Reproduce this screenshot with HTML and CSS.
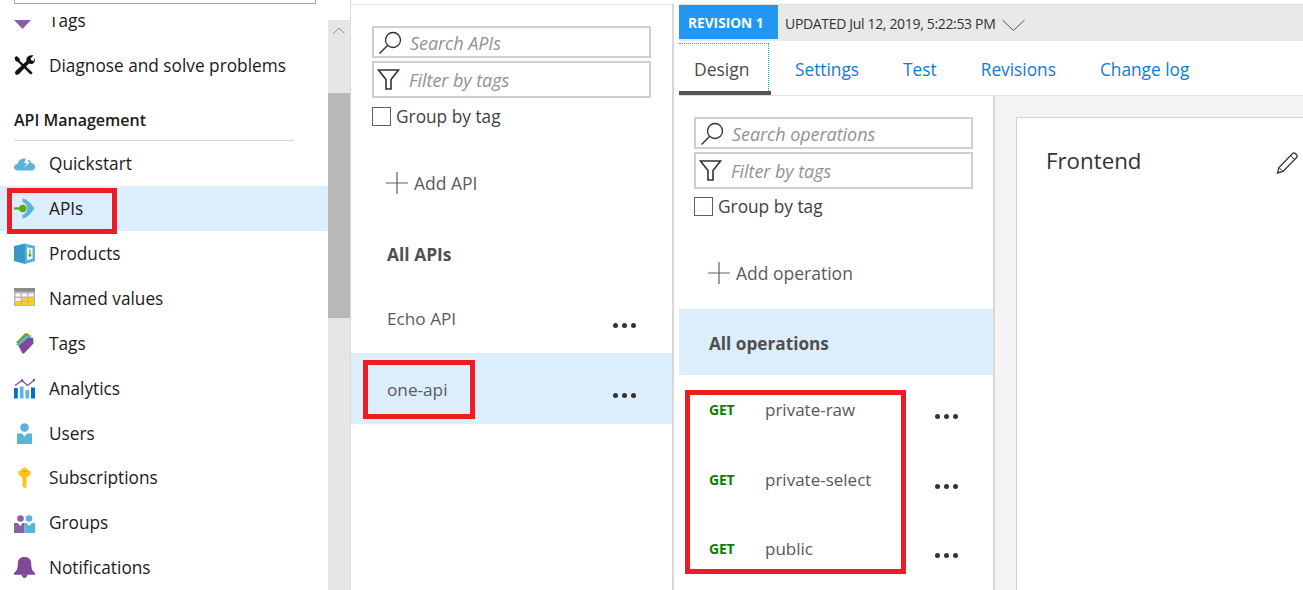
FILE: index.html
```html
<!DOCTYPE html>
<html lang="en">
<head>
<meta charset="utf-8">
<title>API Management - APIs</title>
<link rel="stylesheet" href="styles.css">
</head>
<body>
<div class="page">
  <aside class="sidebar">
    <div class="side-search"></div>
    <div class="side-body">
      <nav class="nav">
        <div class="nav-item"><svg class="ico" viewBox="0 0 21 21"><path d="M0 10H17L8.500 19z" fill="#8661a5"/></svg><span>Tags</span></div>
        <div class="nav-item"><svg class="ico" viewBox="0 0 21 21"><path d="M2.500 1L5.500 3.500 6 6 18.500 17.500 17.200 19.500 16 19 4 7 1.500 6 0.500 2.500z" fill="#111"/><path d="M14 1.500c2-1.500 4-1.500 5.500-1L16.500 3.500l1 2 2 .5L20.500 3c.8 2.500 0 4.500-1.500 5.500-1.500.8-3 .5-4 0L5.500 18.500C4 20.300 2 20 1.500 19.200 .7 18 1 16.700 2 15.800L12.500 6c-.5-1.500 0-3.200 1.500-4.500z" fill="#111"/></svg><span>Diagnose and solve problems</span></div>
        <h3 class="nav-title">API Management</h3>
        <div class="nav-item"><svg class="ico" viewBox="0 0 21 21"><path d="M4 17.500C1.500 17.500 0 16 0 14.200 0 12.300 1.500 11 3.500 11c.5-2.500 2.500-5 5.500-5.500h3L10 10h3l-2.500 4.500L16 9l-2.200-.2 .7-2.300c1.500.8 2.500 2 2.800 3.500 2.200.2 3.700 1.800 3.700 4 0 2-1.500 3.500-3.500 3.500z" fill="#59b4d9"/></svg><span>Quickstart</span></div>
        <div class="nav-item is-current"><svg class="ico" viewBox="0 0 21 21"><path d="M8.500 .5c5 .8 8.500 5 12 10-3.500 5-7 9.200-12 10v-3.800c3-.5 4.800-3.200 4.800-6.200S11.500 4.800 8.500 4.300z" fill="#59b4d9"/><path d="M0 9.300h6v2.400H0z" fill="#5ca80f"/><circle cx="8.800" cy="10.500" r="3.700" fill="#5ca80f"/></svg><span>APIs</span></div>
        <div class="nav-item"><svg class="ico" viewBox="0 0 21 21"><path d="M0 3l11-2.500v20.500L0 18z" fill="#3999c6"/><path d="M11 .5L21 3v15l-10 3z" fill="#59b4d9"/><path d="M13 4.500l5.500 .7v10.600L13 17z" fill="#fff"/><path d="M15.300 6.500h1.200v5H18l-2.100 3-2-3h1.400z" fill="#5ca80f"/></svg><span>Products</span></div>
        <div class="nav-item"><svg class="ico" viewBox="0 0 21 21"><path d="M0 0h21v18H0z" fill="#b8b8b8"/><path d="M0 0h21v3.500H0z" fill="#8a8a8a"/><path d="M1.500 5.500h5v3h-5zM8 5.500h5v3H8zM14.500 5.500h5v3h-5zM1.500 10h5v3h-5z" fill="#fff"/><path d="M8 10h5v3H8zM14.500 10h5v3h-5zM1.500 14h5v3h-5zM8 14h5v3H8zM14.500 14h5v3h-5z" fill="#fcd116"/></svg><span>Named values</span></div>
        <div class="nav-item"><svg class="ico" viewBox="0 0 21 21"><path d="M2 9.500L11.500 0l4.500 1.500L6 12z" fill="#5ca80f"/><path d="M2 11.500L12.500 2.500h5.500L7 14z" fill="#59b4d9"/><path d="M4.500 13L14.500 4.500l4.700.3 .3 5.700L10 20.500 8.500 20.500z" fill="#804998"/></svg><span>Tags</span></div>
        <div class="nav-item"><svg class="ico" viewBox="0 0 21 21"><path d="M0 10h3.800v10.500H0z" fill="#0072c6"/><path d="M6 8.500h3.500v12H6z" fill="#59b4d9"/><path d="M11.500 12H15v8.500h-3.500z" fill="#59b4d9"/><path d="M17 9.500h4v11h-4z" fill="#0072c6"/><path d="M1 7.500L8 2.500l5.500 5 7-5.500" fill="none" stroke="#804998" stroke-width="1.300"/><circle cx="8" cy="2.500" r="1.300" fill="#804998"/><circle cx="20" cy="2" r="1.300" fill="#804998"/></svg><span>Analytics</span></div>
        <div class="nav-item"><svg class="ico" viewBox="0 0 21 21"><circle cx="10.500" cy="4.500" r="4.300" fill="#59b4d9"/><path d="M3 10.500h5l2.500 3 2.500-3h5v10.500H3z" fill="#59b4d9"/></svg><span>Users</span></div>
        <div class="nav-item"><svg class="ico" viewBox="0 0 21 21"><path d="M10.500 0l6 4.500v3l-4 3.500v9l-1.500 1-1.500-.5-1-1V11l-4-3.500v-3z" fill="#fcc419"/><path d="M8 4h5v1H8z" fill="#e3a800"/></svg><span>Subscriptions</span></div>
        <div class="nav-item"><svg class="ico" viewBox="0 0 21 21"><circle cx="6.500" cy="6.500" r="3.300" fill="#8c6399"/><path d="M0 11h3.500L6.500 14l2-3h2v10H0z" fill="#8c6399"/><circle cx="15" cy="6.500" r="3.300" fill="#59b4d9"/><path d="M10.500 11h2L15 14l3-3h3v10H10.500z" fill="#59b4d9"/></svg><span>Groups</span></div>
        <div class="nav-item"><svg class="ico" viewBox="0 0 21 21"><path d="M10.500 0c4.500 0 6.700 2.500 6.700 6.500 0 4.500 .8 7.500 3.800 9.500v1.700H0V16c3-2 3.800-5 3.800-9.500C3.800 2.500 6 0 10.500 0z" fill="#804998"/><path d="M7.500 17.500h6c-.3 2-1.500 3.500-3 3.500s-2.700-1.500-3-3.500z" fill="#804998"/></svg><span>Notifications</span></div>
      </nav>
      <div class="scrollbar">
        <div class="scroll-up"><svg class="scroll-chev" viewBox="0 0 12 7"><path d="M.5 6.500L6 1l5.500 5.500" fill="none" stroke="#8a8a8a"/></svg></div>
        <div class="scroll-thumb"></div>
      </div>
    </div>
  </aside>

  <section class="api-panel">
    <div class="field field-search"><svg class="field-ico" viewBox="0 0 24 24"><circle cx="15" cy="9" r="7.500" fill="none" stroke="#333" stroke-width="1.300"/><path d="M9.500 14.500L1.500 22.500" stroke="#333" stroke-width="1.500"/></svg><span>Search APIs</span></div>
    <div class="field field-filter"><svg class="field-ico" viewBox="0 0 24 24"><path d="M1.500 2h20l-7.500 9.500V21H9V11.500z" fill="none" stroke="#333" stroke-width="1.600"/></svg><span>Filter by tags</span></div>
    <label class="check"><span class="box"></span>Group by tag</label>
    <div class="add"><svg class="plus" viewBox="0 0 22 22"><path d="M0 11h22M11 0v22" stroke="#6d5b5b" stroke-width="1.200"/></svg>Add API</div>
    <div class="all-apis">All APIs</div>
    <div class="api-row"><span>Echo API</span><span class="dots"><i></i><i></i><i></i></span></div>
    <div class="api-row is-selected"><span>one-api</span><span class="dots"><i></i><i></i><i></i></span></div>
  </section>

  <main class="detail">
    <div class="revbar">
      <span class="rev-badge">REVISION 1</span>
      <span class="rev-date">UPDATED Jul 12, 2019, 5:22:53 PM</span>
      <svg class="rev-chev" viewBox="0 0 23 12"><path d="M.5 1L11.500 11.500 22.500 1" fill="none" stroke="#555"/></svg>
    </div>
    <div class="tabs">
      <a class="tab is-active">Design</a>
      <a class="tab">Settings</a>
      <a class="tab">Test</a>
      <a class="tab">Revisions</a>
      <a class="tab">Change log</a>
    </div>
    <div class="detail-body">
      <section class="ops">
        <div class="field field-search"><svg class="field-ico" viewBox="0 0 24 24"><circle cx="15" cy="9" r="7.500" fill="none" stroke="#333" stroke-width="1.300"/><path d="M9.500 14.500L1.500 22.500" stroke="#333" stroke-width="1.500"/></svg><span>Search operations</span></div>
        <div class="field field-filter"><svg class="field-ico" viewBox="0 0 24 24"><path d="M1.500 2h20l-7.500 9.500V21H9V11.500z" fill="none" stroke="#333" stroke-width="1.600"/></svg><span>Filter by tags</span></div>
        <label class="check"><span class="box"></span>Group by tag</label>
        <div class="add"><svg class="plus" viewBox="0 0 22 22"><path d="M0 11h22M11 0v22" stroke="#6d5b5b" stroke-width="1.200"/></svg>Add operation</div>
        <div class="all-ops">All operations</div>
        <div class="op-row"><b class="verb">GET</b><span class="op-name">private-raw</span><span class="dots"><i></i><i></i><i></i></span></div>
        <div class="op-row"><b class="verb">GET</b><span class="op-name">private-select</span><span class="dots"><i></i><i></i><i></i></span></div>
        <div class="op-row"><b class="verb">GET</b><span class="op-name">public</span><span class="dots"><i></i><i></i><i></i></span></div>
      </section>
      <section class="canvas">
        <div class="card">
          <h2 class="card-title">Frontend</h2>
          <svg class="pencil" viewBox="0 0 22 22"><path d="M16.500 1.500c1-.8 2-.8 3 .2l1 1c.8 1 .8 2-.2 3L7 19.500 1.500 21 3 15.500z" fill="none" stroke="#333" stroke-width="1.300"/><path d="M14.500 3.500l4.500 4.500M3 15.500L7 19.500" fill="none" stroke="#333"/></svg>
        </div>
      </section>
    </div>
  </main>

  <div class="mark mark-apis"></div>
  <div class="mark mark-api"></div>
  <div class="mark mark-ops"></div>
</div>
</body>
</html>
```

FILE: styles.css
```css
* { box-sizing: border-box; }
html, body { margin: 0; height: 100%; overflow: hidden; background: #fff; }
body { font-family: "Open Sans", "Noto Sans", sans-serif; color: #1f1f1f; }
.page { position: relative; display: flex; width: 1303px; height: 590px; overflow: hidden; }

/* sidebar */
.sidebar { width: 351px; flex: none; border-right: 1px solid #d9d9d9; }
.side-search { width: 302px; height: 4px; margin-left: 14px; border: 1px solid #a6a6a6; border-top: 0; }
.side-body { display: flex; height: 586px; }
.nav { width: 328px; flex: none; height: 570px; margin-top: 13px; overflow: hidden; }
.nav-item { display: flex; align-items: center; height: 44.9px; padding-left: 14px; font-size: 17.250px; color: #1b1b1b; }
.nav-item:first-child { margin-top: -19px; }
.nav-item span { margin-left: 14px; }
.ico { width: 21px; height: 21px; flex: none; }
.nav-title { margin: 21px 0 0 14px; width: 280px; height: 32.500px; border-bottom: 1px solid #d6d6d6; font-size: 16px; line-height: 22px; font-weight: 600; color: #1b1b1b; }
.is-current { background: #dcedfc; }
.scrollbar { width: 22px; margin-top: 16px; background: #e6e6e6; }
.scroll-up { height: 73px; padding: 7px 0 0 5px; }
.scroll-chev { display: block; width: 12px; height: 7px; }
.scroll-thumb { height: 225px; background: #b8b8b8; }

/* shared fields */
.field { display: flex; align-items: center; width: 279px; border: 2px solid #cfcfcf; font-style: italic; font-size: 18px; letter-spacing: -.05px; color: #96918f; }
.field-search { height: 32px; padding: 1px 0 0 4px; }
.field-filter { height: 37px; margin-top: 3px; padding-left: 3px; }
.field-ico { width: 24px; height: 24px; flex: none; margin-right: 8px; }
.check { display: flex; align-items: center; margin-top: 8px; height: 20px; font-size: 17.300px; color: #3f3f3f; }
.box { width: 19px; height: 19px; margin-right: 5px; border: 1px solid #5f5f5f; background: #fff; }
.add { display: flex; align-items: center; height: 24px; font-size: 17.500px; color: #5b5b5b; }
.plus { width: 22px; height: 22px; margin-right: 6px; }
.dots { display: flex; gap: 4px; }
.dots i { width: 5px; height: 5px; border-radius: 50%; background: #333; }

/* API list */
.api-panel { width: 321px; flex: none; margin-top: 4px; padding-top: 21px; border-top: 1px solid #e2e2e2; }
.api-panel .field, .api-panel .check { margin-left: 21px; }
.api-panel .add { margin: 45px 0 0 35px; }
.all-apis { margin: 47px 0 0 36px; height: 24px; line-height: 24px; font-size: 17.400px; font-weight: 700; color: #4f4f4f; }
.api-row { display: flex; align-items: flex-start; justify-content: space-between; font-size: 17.200px; color: #5b5b5b; padding: 23px 36px 0; }
.all-apis + .api-row { margin-top: 18px; height: 69px; }
.api-row.is-selected { background: #dcedfc; height: 71px; padding-top: 25px; }
.api-row .dots { margin-top: 16px; }
.api-row.is-selected .dots { margin-top: 15px; }
.api-row span:first-child { line-height: 24px; }

/* detail */
.detail { flex: 1; min-width: 0; margin-top: 4px; padding-left: 5px; border-left: 2px solid #d8d8d8; }
.revbar { display: flex; align-items: center; height: 37px; background: #e9e9e9; border-top: 1px solid #e2e2e2; }
.rev-badge { display: flex; align-items: center; align-self: flex-start; width: 99px; height: 34px; padding-left: 9px; background: #2196f3; color: #fff; font-size: 13.700px; font-weight: 700; }
.rev-date { margin-left: 7px; font-size: 14px; letter-spacing: -.33px; color: #333; }
.rev-chev { width: 23px; height: 12px; margin: 3px 0 0 7px; }
.tabs { display: flex; height: 55px; border-bottom: 1px solid #e0e0e0; }
.tab { position: relative; display: flex; align-items: center; height: 54px; padding-top: 3px; margin-right: 44px; font-size: 17.300px; color: #0f7ad8; }
.tab.is-active { width: 92px; margin-right: 24px; padding: 5px 0 0 15px; font-size: 17.500px; color: #4a4a4a; border-bottom: 4px solid #555; }
.tab.is-active::after { content: ""; position: absolute; left: 0; right: 2px; top: 2px; bottom: 0; border-top: 1px dotted #1ea7e8; border-right: 1px dotted #1ea7e8; }
.detail-body { display: flex; height: 495px; }
.ops { width: 316px; flex: none; padding-top: 21px; border-right: 2px solid #d9d9d9; }
.ops .field, .ops .check { margin-left: 15px; }
.ops .check { margin-top: 7px; }
.ops .add { margin: 45px 0 0 29px; }
.all-ops { display: flex; align-items: center; height: 66px; margin-top: 24px; padding: 2px 0 0 30px; background: #dcedfc; font-size: 17.200px; font-weight: 700; color: #4f4f4f; }
.op-row { display: flex; align-items: flex-start; height: 69.500px; padding: 23px 0 0 30px; font-size: 17px; color: #5a5560; }
.verb { width: 56px; font-size: 14px; line-height: 24px; font-weight: 700; color: #0a8000; letter-spacing: -.2px; }
.op-name { width: 170px; line-height: 24px; }
.op-row .dots { margin-top: 16px; }
.canvas { flex: 1; min-width: 0; padding: 21px 0 0 21px; background: #f4f4f4; }
.card { display: flex; justify-content: space-between; align-items: flex-start; height: 500px; padding: 27px 5px 0 29px; background: #fff; border: 1px solid #d4d4d4; border-right: 0; }
.card-title { margin: 0; font-size: 22.300px; line-height: 32px; font-weight: 400; color: #333; }
.pencil { width: 22px; height: 22px; margin-top: 7px; }

/* red annotations painted over the screenshot */
.mark { position: absolute; border: 5px solid #ed1c24; pointer-events: none; }
.mark-apis { left: 7px; top: 188px; width: 110px; height: 46px; }
.mark-api { left: 363px; top: 360px; width: 112px; height: 59px; }
.mark-ops { left: 685px; top: 390px; width: 221px; height: 184px; }
```
